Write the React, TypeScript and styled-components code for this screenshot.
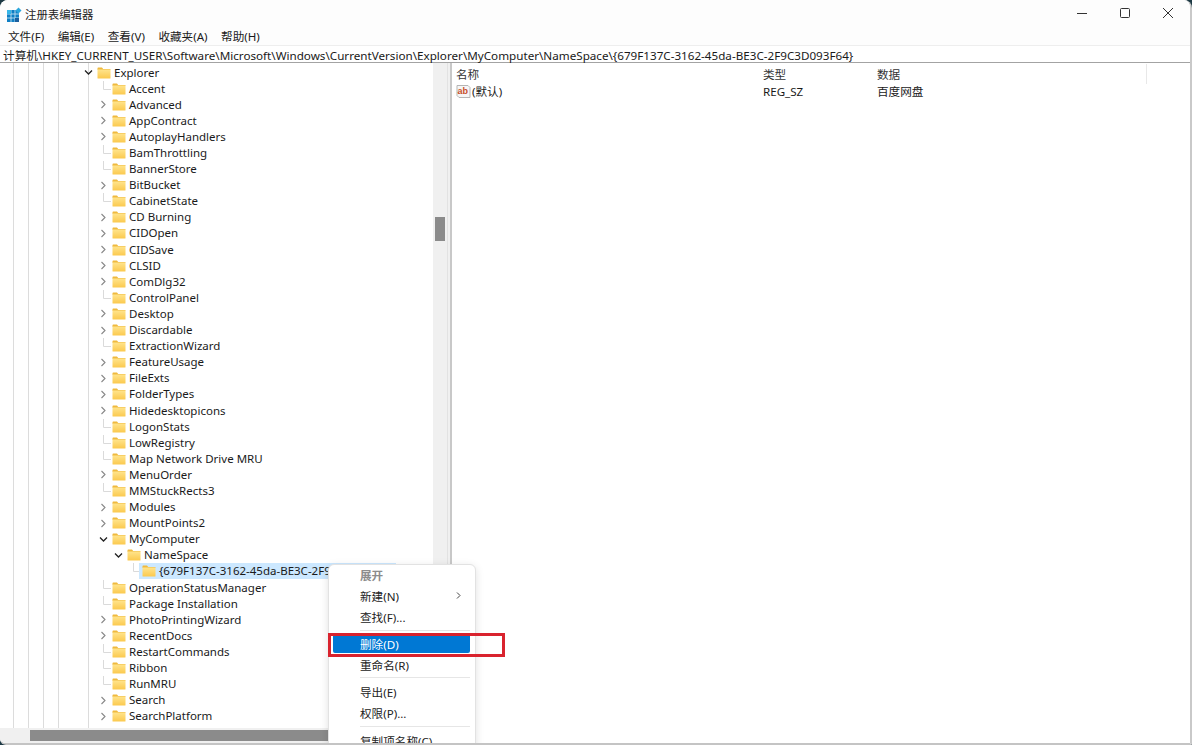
import React from "react";
import styled, { createGlobalStyle } from "styled-components";

const Global = createGlobalStyle`
  html, body { margin: 0; padding: 0; background: #1d3a45; }
  #root { width: 1192px; height: 745px; }
  * { box-sizing: border-box; }
`;

const Window = styled.div`
  position: relative;
  width: 1192px;
  height: 745px;
  overflow: hidden;
  display: flex;
  flex-direction: column;
  background: #ffffff;
  border-radius: 8px 8px 0 6px;
  border-right: 2px solid #c9c9c9;
  border-bottom: 2px solid #c4c4c4;
  font-family: "Noto Sans", "Noto Sans CJK SC", sans-serif;
  font-size: 11.6px;
  color: #1a1a1a;
`;

const TitleBar = styled.div`
  height: 26px;
  flex: none;
  display: flex;
  align-items: center;
  background: #fdfdfd;
`;

const TitleGroup = styled.div`
  display: flex;
  align-items: center;
  gap: 3px;
  padding: 3px 0 0 6px;
`;

const AppTitle = styled.span`
  font-size: 11.4px;
  color: #222;
  line-height: 1;
`;

const WindowButtons = styled.div`
  margin-left: auto;
  display: flex;
  align-items: center;
  gap: 29px;
  padding-right: 15px;
  color: #333;
  height: 100%;
`;

const MenuBar = styled.div`
  height: 19px;
  flex: none;
  display: flex;
  align-items: center;
  padding: 2px 0 0 8px;
  gap: 13.5px;
  background: #fdfdfd;
`;

const MenuLabel = styled.span`
  font-size: 11.6px;
  line-height: 1;
`;

const AddressBar = styled.div`
  height: 18px;
  flex: none;
  display: flex;
  align-items: center;
  padding-left: 3px;
  background: #ffffff;
  border-top: 1px solid #eeeeee;
  border-bottom: 1px solid #a3a3a3;
  font-size: 11.67px;
  white-space: nowrap;
`;

const Body = styled.div`
  flex: 1;
  min-height: 0;
  display: flex;
`;

const TreePane = styled.div`
  width: 447px;
  flex: none;
  display: grid;
  grid-template-columns: 433px 14px;
  grid-template-rows: 1fr 15px;
`;

const guideLines = [13, 28, 43, 58, 88]
  .map((x) => `linear-gradient(#dcdcdc, #dcdcdc) ${x}px 0 / 1px 100% no-repeat`)
  .join(", ");

const TreeList = styled.div`
  overflow: hidden;
  padding-top: 1.5px;
  background: ${guideLines};
`;

const TreeRow = styled.div<{ $level: number }>`
  height: 16.1px;
  display: flex;
  align-items: center;
  padding-left: ${(p) => 81 + p.$level * 15}px;
  white-space: nowrap;
  font-size: 11.5px;
  line-height: 16px;
`;

const Toggle = styled.span`
  width: 15px;
  flex: none;
  height: 16px;
  display: flex;
  align-items: center;
  justify-content: center;
  color: #555;
`;

const FolderSlot = styled.span<{ $selected?: boolean }>`
  height: 16px;
  flex: none;
  display: flex;
  align-items: center;
  background: ${(p) => (p.$selected ? "#cce8ff" : "transparent")};
  margin-left: ${(p) => (p.$selected ? "-2px" : "0")};
  width: ${(p) => (p.$selected ? "20px" : "18px")};
  padding-left: ${(p) => (p.$selected ? "3px" : "1px")};
`;

const RowLabel = styled.span<{ $selected?: boolean }>`
  height: 16px;
  line-height: 16px;
  background: ${(p) => (p.$selected ? "#cce8ff" : "transparent")};
`;

const VScroll = styled.div`
  background: #f0f0f0;
  padding: 154px 2px 0 2px;
`;

const VThumb = styled.div`
  width: 10px;
  height: 24px;
  background: #8b8b8b;
`;

const HScroll = styled.div`
  background: #f0f0f0;
  padding: 2px 0 2px 30px;
  grid-column: 1 / span 2;
`;

const HThumb = styled.div`
  width: 300px;
  height: 11px;
  background: #8b8b8b;
`;

const Splitter = styled.div`
  width: 5px;
  flex: none;
  background: #f0f0f0;
  border-left: 1px solid #e2e2e2;
  border-right: 2px solid #c8c8c8;
`;

const ListPane = styled.div`
  flex: 1;
  min-width: 0;
  display: flex;
  flex-direction: column;
`;

const ListHeader = styled.div`
  height: 20px;
  flex: none;
  display: grid;
  grid-template-columns: 307px 114px 269px 1fr;
  align-items: center;
  padding: 1px 0 0 4px;
`;

const HeaderCell = styled.span`
  font-size: 11.6px;
  color: #333;
`;

const HeaderEdge = styled.span`
  height: 20px;
  border-left: 1px solid #e8e8e8;
`;

const ListRow = styled.div`
  height: 15px;
  display: grid;
  grid-template-columns: 307px 114px 1fr;
  align-items: center;
  padding-left: 4px;
  font-size: 11.6px;
`;

const NameCell = styled.span`
  display: flex;
  align-items: center;
  gap: 1px;
`;

const ContextMenu = styled.div`
  position: absolute;
  left: 328px;
  top: 564px;
  width: 148px;
  height: 190px;
  background: #ffffff;
  border: 1px solid #e2e2e2;
  border-radius: 6px;
  box-shadow: 0 2px 8px rgba(0, 0, 0, 0.12);
  padding: 0 5px 0 4px;
`;

const MenuItem = styled.div<{ $active?: boolean; $disabled?: boolean }>`
  height: ${(p) => (p.$active ? "19px" : "21px")};
  margin: ${(p) => (p.$active ? "1px 0" : "0")};
  display: flex;
  align-items: center;
  justify-content: space-between;
  padding: 0 8px 0 27px;
  border-radius: 2px;
  font-size: 11.6px;
  font-weight: ${(p) => (p.$disabled ? 700 : 400)};
  background: ${(p) => (p.$active ? "#0078d4" : "transparent")};
  color: ${(p) => (p.$active ? "#ffffff" : p.$disabled ? "#8c8c8c" : "#222222")};
  &:first-child { margin-top: -1px; }
`;

const MenuDivider = styled.div<{ $tight?: boolean }>`
  height: 1px;
  margin: ${(p) => (p.$tight ? "2px" : "3px")} 0 3px 27px;
  background: #e6e6e6;
`;

const Highlight = styled.div`
  position: absolute;
  left: 328px;
  top: 633px;
  width: 177px;
  height: 24px;
  border: 3px solid #d9232e;
  pointer-events: none;
`;

const AppIcon = () => (
  <svg width="16" height="16" viewBox="0 0 16 16">
    <rect x="1" y="3" width="12" height="12" fill="#0f7fc4" />
    <path d="M1 7h12M1 11h12M5 3v12M9 3v12" stroke="#cfeaf7" strokeWidth="0.8" />
    <rect x="1" y="3" width="4" height="4" fill="#35b6e8" />
    <rect x="9" y="11" width="4" height="4" fill="#1b5f9e" />
    <path d="M12.5 0.5l3 3-3 3-3-3z" fill="#2aa6dc" />
  </svg>
);

const Folder = () => (
  <svg width="14" height="12" viewBox="0 0 14 12">
    <defs>
      <linearGradient id="fold" x1="0" y1="0" x2="0" y2="1">
        <stop offset="0" stopColor="#ffe48c" />
        <stop offset="1" stopColor="#fbc94e" />
      </linearGradient>
    </defs>
    <path d="M0.5 1.2C0.5 .8 .8 .5 1.2 .5H5l1.2 1.5H13c.3 0 .5.2.5.5V3H.5z" fill="#efb93e" />
    <rect x="0.5" y="2.5" width="13" height="9" rx="0.6" fill="url(#fold)" />
  </svg>
);

const Chevron = ({ open }: { open?: boolean }) => (
  <svg width="9" height="9" viewBox="0 0 9 9" fill="none" stroke="currentColor" strokeWidth="1.1">
    {open ? <path d="M1 2.5l3.5 3.5L8 2.5" stroke="#222" strokeWidth="1.3" /> : <path d="M2.5 1l3.5 3.5L2.5 8" stroke="#888" />}
  </svg>
);

const Connector = () => (
  <svg width="15" height="16" viewBox="0 0 15 16" fill="none" stroke="#dadada">
    <path d="M7.5 0v8.5H15" />
  </svg>
);

const ValueIcon = () => (
  <svg width="15" height="15" viewBox="0 0 15 15">
    <path d="M1 1.5h11l2 2v10H3l-2-2z" fill="#f6f6f6" stroke="#b5b5b5" />
    <text x="1.5" y="9.5" fontSize="9" fontWeight="700" fontFamily="Liberation Sans, sans-serif" fill="#c8502a">ab</text>
  </svg>
);

type Row = [string, 0 | 1 | 2 | 3, "o" | "c" | "n", boolean?];

const rows: Row[] = [
  ["Explorer", 0, "o"],
  ["Accent", 1, "n"],
  ["Advanced", 1, "c"],
  ["AppContract", 1, "c"],
  ["AutoplayHandlers", 1, "c"],
  ["BamThrottling", 1, "n"],
  ["BannerStore", 1, "n"],
  ["BitBucket", 1, "c"],
  ["CabinetState", 1, "n"],
  ["CD Burning", 1, "c"],
  ["CIDOpen", 1, "c"],
  ["CIDSave", 1, "c"],
  ["CLSID", 1, "c"],
  ["ComDlg32", 1, "c"],
  ["ControlPanel", 1, "n"],
  ["Desktop", 1, "c"],
  ["Discardable", 1, "c"],
  ["ExtractionWizard", 1, "n"],
  ["FeatureUsage", 1, "c"],
  ["FileExts", 1, "c"],
  ["FolderTypes", 1, "c"],
  ["Hidedesktopicons", 1, "c"],
  ["LogonStats", 1, "n"],
  ["LowRegistry", 1, "n"],
  ["Map Network Drive MRU", 1, "n"],
  ["MenuOrder", 1, "c"],
  ["MMStuckRects3", 1, "n"],
  ["Modules", 1, "c"],
  ["MountPoints2", 1, "c"],
  ["MyComputer", 1, "o"],
  ["NameSpace", 2, "o"],
  ["{679F137C-3162-45da-BE3C-2F9C3D093F64}", 3, "n", true],
  ["OperationStatusManager", 1, "n"],
  ["Package Installation", 1, "n"],
  ["PhotoPrintingWizard", 1, "c"],
  ["RecentDocs", 1, "c"],
  ["RestartCommands", 1, "n"],
  ["Ribbon", 1, "n"],
  ["RunMRU", 1, "n"],
  ["Search", 1, "c"],
  ["SearchPlatform", 1, "c"],
];

const menus = ["文件(F)", "编辑(E)", "查看(V)", "收藏夹(A)", "帮助(H)"];

export default function App() {
  return (
    <>
      <Global />
      <Window>
        <TitleBar>
          <TitleGroup>
            <AppIcon />
            <AppTitle>注册表编辑器</AppTitle>
          </TitleGroup>
          <WindowButtons>
            <svg width="14" height="14" viewBox="0 0 14 14" stroke="currentColor" fill="none"><path d="M2 7.5h10" /></svg>
            <svg width="14" height="14" viewBox="0 0 14 14" stroke="currentColor" fill="none"><rect x="2.5" y="2.5" width="9" height="9" rx="1" /></svg>
            <svg width="14" height="14" viewBox="0 0 14 14" stroke="currentColor" fill="none"><path d="M2 2l10 10M12 2L2 12" /></svg>
          </WindowButtons>
        </TitleBar>
        <MenuBar>
          {menus.map((m) => (
            <MenuLabel key={m}>{m}</MenuLabel>
          ))}
        </MenuBar>
        <AddressBar>计算机\HKEY_CURRENT_USER\Software\Microsoft\Windows\CurrentVersion\Explorer\MyComputer\NameSpace\{"{679F137C-3162-45da-BE3C-2F9C3D093F64}"}</AddressBar>
        <Body>
          <TreePane>
            <TreeList>
              {rows.map(([name, level, kind, selected]) => (
                <TreeRow key={name} $level={level}>
                  <Toggle>
                    {kind === "o" && <Chevron open />}
                    {kind === "c" && <Chevron />}
                    {kind === "n" && <Connector />}
                  </Toggle>
                  <FolderSlot $selected={selected}>
                    <Folder />
                  </FolderSlot>
                  <RowLabel $selected={selected}>{name}</RowLabel>
                </TreeRow>
              ))}
            </TreeList>
            <VScroll>
              <VThumb />
            </VScroll>
            <HScroll>
              <HThumb />
            </HScroll>
          </TreePane>
          <Splitter />
          <ListPane>
            <ListHeader>
              <HeaderCell>名称</HeaderCell>
              <HeaderCell>类型</HeaderCell>
              <HeaderCell>数据</HeaderCell>
              <HeaderEdge />
            </ListHeader>
            <ListRow>
              <NameCell>
                <ValueIcon />
                (默认)
              </NameCell>
              <span>REG_SZ</span>
              <span>百度网盘</span>
            </ListRow>
          </ListPane>
        </Body>
        <ContextMenu>
          <MenuItem $disabled>展开</MenuItem>
          <MenuItem>
            新建(N)
            <svg width="7" height="9" viewBox="0 0 7 9" fill="none" stroke="#444"><path d="M2 1.5l3 3-3 3" /></svg>
          </MenuItem>
          <MenuItem>查找(F)...</MenuItem>
          <MenuDivider />
          <MenuItem $active>删除(D)</MenuItem>
          <MenuItem>重命名(R)</MenuItem>
          <MenuDivider $tight />
          <MenuItem>导出(E)</MenuItem>
          <MenuItem>权限(P)...</MenuItem>
          <MenuDivider />
          <MenuItem>复制项名称(C)</MenuItem>
        </ContextMenu>
        <Highlight />
      </Window>
    </>
  );
}
